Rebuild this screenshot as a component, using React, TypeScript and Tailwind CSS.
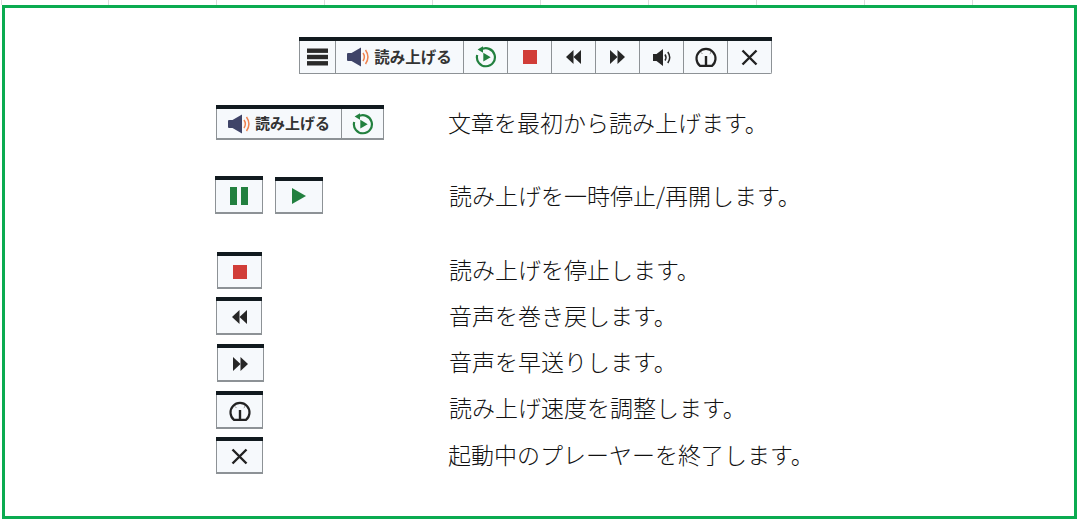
const Speaker = () => (
  <svg width="22" height="20" viewBox="0 0 22 20">
    <path d="M1 6h3.500L14 0.500v19L4.500 14H1q-1 0-1-1V7q0-1 1-1z" fill="#3f4468" />
    <path d="M16 6c1.700 2.500 1.700 5.500 0 8" fill="none" stroke="#ef8350" strokeWidth="1.500" />
    <path d="M18.500 3c3 4.300 3 9.700 0 14" fill="none" stroke="#ef8350" strokeWidth="1.500" />
  </svg>
);

const Replay = () => (
  <svg width="22" height="22" viewBox="0 0 22 22">
    <path d="M6.200 3.600A9 9 0 1 1 2.200 9" fill="none" stroke="#22803f" strokeWidth="2.200" />
    <path d="M8 0.200v6.600L2.600 3.600z" fill="#22803f" />
    <path d="M8.300 6.800l7.400 4.400-7.400 4.400z" fill="#22803f" />
  </svg>
);

const Menu = () => (
  <svg width="22" height="18" viewBox="0 0 22 18">
    <rect x="0" y="0.500" width="21" height="4.400" fill="#2a2a2a" />
    <rect x="0" y="6.800" width="21" height="4.400" fill="#2a2a2a" />
    <rect x="0" y="13.100" width="21" height="4.400" fill="#2a2a2a" />
  </svg>
);

const Stop = () => <span className="block h-[14px] w-[14px] bg-[#d13d38]" />;

const Rew = () => (
  <svg width="15" height="14" viewBox="0 0 15 14">
    <path d="M7.500 0v14L0 7z" fill="#262626" />
    <path d="M15 0v14L7.500 7z" fill="#262626" />
  </svg>
);

const Ff = () => (
  <svg width="15" height="14" viewBox="0 0 15 14">
    <path d="M0 0v14l7.500-7z" fill="#262626" />
    <path d="M7.500 0v14L15 7z" fill="#262626" />
  </svg>
);

const Volume = () => (
  <svg width="18" height="19" viewBox="0 0 18 19">
    <path d="M0 6h3.500L10 1v17l-6.500-5H0z" fill="#262626" />
    <path d="M12 6.500c1.200 1.800 1.200 4.200 0 6" fill="none" stroke="#262626" strokeWidth="1.500" />
    <path d="M14.800 4c2.300 3.300 2.300 7.700 0 11" fill="none" stroke="#262626" strokeWidth="1.500" />
  </svg>
);

const Gauge = () => (
  <svg width="22" height="20" viewBox="0 0 22 20">
    <path d="M5 18.800A9.500 9.500 0 1 1 17 18.800z" fill="none" stroke="#222" strokeWidth="2.200" />
    <path d="M11 9v9" stroke="#222" strokeWidth="2.400" />
    <path d="M6 5.500l1.200 1.200M16 5.500l-1.200 1.200" stroke="#555" strokeWidth="0.900" />
  </svg>
);

const Close = () => (
  <svg width="17" height="17" viewBox="0 0 17 17">
    <path d="M1.500 1.500l14 14M15.500 1.500l-14 14" stroke="#222" strokeWidth="2.400" />
  </svg>
);

const Pause = () => (
  <span className="flex gap-[4px]">
    <span className="h-[18px] w-[7px] bg-[#22803f]" />
    <span className="h-[18px] w-[7px] bg-[#22803f]" />
  </span>
);

const Play = () => (
  <svg width="14" height="16" viewBox="0 0 14 16">
    <path d="M0 0l14 8-14 8z" fill="#22803f" />
  </svg>
);

const Read = ({ size }: { size: string }) => (
  <span className={`flex items-center gap-[5px] font-bold text-[#333] ${size}`}>
    <Speaker />
    読み上げる
  </span>
);

const barCell = "flex h-[33px] items-center justify-center border-r border-b border-[#8d9296] bg-[#f6f9fc]";

const Single = ({ w, h, children }: { w: string; h: string; children: React.ReactNode }) => (
  <div className={`flex flex-col ${w} ${h} border-t-[4px] border-[#111a1f]`}>
    <div className="flex flex-1 items-center justify-center border-x border-b-2 border-[#8d9296] bg-[#f6f9fc]">
      {children}
    </div>
  </div>
);

const Text = ({ children, cls }: { children: React.ReactNode; cls: string }) => (
  <p className={`${cls} whitespace-nowrap text-[23px] leading-[30px] font-light text-[#111]`}>{children}</p>
);

export default function App() {
  return (
    <div className="flex h-[519px] w-[1079px] flex-col overflow-hidden bg-white font-['Noto_Sans_CJK_JP','Noto_Sans',sans-serif]">
      <div className="flex h-[5px] shrink-0">
        <span className="ml-[1px] w-[107px] border-l border-[#dcdcdc]" />
        <span className="w-[108px] border-l border-[#dcdcdc]" />
        <span className="w-[108px] border-l border-[#dcdcdc]" />
        <span className="w-[108px] border-l border-[#dcdcdc]" />
        <span className="w-[108px] border-l border-[#dcdcdc]" />
        <span className="w-[108px] border-l border-[#dcdcdc]" />
        <span className="w-[108px] border-l border-[#dcdcdc]" />
        <span className="w-[108px] border-l border-[#dcdcdc]" />
        <span className="w-[108px] border-l border-[#dcdcdc]" />
        <span className="border-l border-[#dcdcdc]" />
      </div>
      <div className="ml-[2px] flex h-[514px] w-[1075px] flex-col border-[3px] border-[#0bab50]">
        {/* player bar */}
        <div className="ml-[294px] mt-[29px] flex w-[473px] flex-col border-t-[4px] border-[#111a1f]">
          <div className="flex border-l border-[#8d9296]">
            <div className={`${barCell} w-[36px]`}><Menu /></div>
            <div className={`${barCell} w-[128px]`}><Read size="text-[15.500px]" /></div>
            <div className={`${barCell} w-[44px]`}><Replay /></div>
            <div className={`${barCell} w-[44px]`}><Stop /></div>
            <div className={`${barCell} w-[44px]`}><Rew /></div>
            <div className={`${barCell} w-[44px]`}><Ff /></div>
            <div className={`${barCell} w-[44px]`}><Volume /></div>
            <div className={`${barCell} w-[44px]`}><Gauge /></div>
            <div className={`${barCell} w-[44px] rounded-br-[2px]`}><Close /></div>
          </div>
        </div>

        {/* row 1 */}
        <div className="ml-[211px] mt-[31px] flex h-[35px] items-center">
          <div className="flex h-[35px] w-[168px] flex-col border-t-[4px] border-[#111a1f]">
            <div className="flex flex-1 border-x border-b-2 border-[#8d9296] bg-[#f6f9fc]">
              <div className="flex w-[125px] items-center justify-center border-r border-[#8d9296]">
                <Read size="text-[15px]" />
              </div>
              <div className="flex flex-1 items-center justify-center"><Replay /></div>
            </div>
          </div>
          <Text cls="ml-[64px] mb-[2px]">文章を最初から読み上げます。</Text>
        </div>

        {/* row 2 */}
        <div className="ml-[210px] mt-[36px] flex h-[38px] items-center">
          <Single w="w-[48px]" h="h-[38px]"><Pause /></Single>
          <div className="ml-[12px]"><Single w="w-[48px]" h="h-[37px]"><Play /></Single></div>
          <Text cls="ml-[126px]">読み上げを一時停止/再開します。</Text>
        </div>

        {/* row 3 */}
        <div className="ml-[212px] mt-[38px] flex h-[37px] items-center">
          <Single w="w-[45px]" h="h-[37px]"><Stop /></Single>
          <Text cls="ml-[187px] mb-[4px]">読み上げを停止します。</Text>
        </div>

        {/* row 4 */}
        <div className="ml-[211px] mt-[8px] flex h-[38px] items-center">
          <Single w="w-[46px]" h="h-[38px]"><Rew /></Single>
          <Text cls="ml-[187px] mb-[2px]">音声を巻き戻します。</Text>
        </div>

        {/* row 5 */}
        <div className="ml-[212px] mt-[9px] flex h-[38px] items-center">
          <Single w="w-[47px]" h="h-[38px]"><Ff /></Single>
          <Text cls="ml-[185px] mb-[4px]">音声を早送りします。</Text>
        </div>

        {/* row 6 */}
        <div className="ml-[211px] mt-[9px] flex h-[38px] items-center">
          <Single w="w-[47px]" h="h-[38px]"><Gauge /></Single>
          <Text cls="ml-[186px] mb-[6px]">読み上げ速度を調整します。</Text>
        </div>

        {/* row 7 */}
        <div className="ml-[211px] mt-[8px] flex h-[37px] items-center">
          <Single w="w-[47px]" h="h-[37px]"><Close /></Single>
          <Text cls="ml-[185px] mb-[4px]">起動中のプレーヤーを終了します。</Text>
        </div>
      </div>
    </div>
  );
}
